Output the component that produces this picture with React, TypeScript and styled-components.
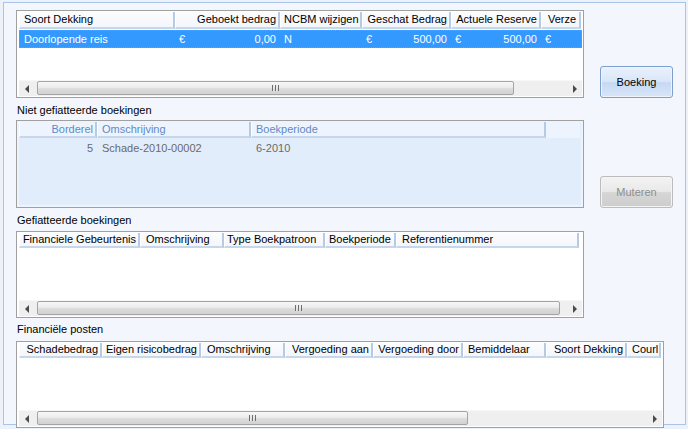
import styled, { createGlobalStyle } from "styled-components";

type Align = "left" | "right";

type Column = {
  label: string;
  w: number;
  align?: Align;
  pad?: number;
};

type Value = string | { money: string };

const GlobalStyle = createGlobalStyle`
  html, body {
    margin: 0;
    padding: 0;
  }

  body {
    width: 688px;
    height: 429px;
    overflow: hidden;
    background: #edf2fa;
    font-family: "Liberation Sans", Arial, sans-serif;
    font-size: 11px;
    color: #000;
  }
`;

const Panel = styled.div`
  box-sizing: border-box;
  width: 683px;
  height: 423px;
  margin: 2px 0 0 3px;
  border: 1px solid #a9c4e9;
  background: #f3f7fd;
  padding: 7px 0 0 12px;
`;

const Section = styled.div`
  display: flex;
  align-items: flex-end;
`;

const Side = styled.div`
  margin-left: 16px;
  display: flex;
`;

const Caption = styled.div<{ $top: number; $bottom: number }>`
  padding: ${(p) => p.$top}px 0 ${(p) => p.$bottom}px 1px;
  line-height: 13px;
  color: #000;
`;

const GridBox = styled.div<{ $w: number; $h: number; $disabled?: boolean }>`
  box-sizing: border-box;
  width: ${(p) => p.$w}px;
  height: ${(p) => p.$h}px;
  border: 1px solid #a0a0a0;
  background: ${(p) => (p.$disabled ? "#e2edfc" : "#fff")};
  box-shadow: ${(p) => (p.$disabled ? "inset 0 0 0 2px #eef4fd" : "none")};
  padding: 1px 1px 1px 2px;
  display: flex;
  flex-direction: column;
  overflow: hidden;
`;

const HeaderRow = styled.div<{ $h: number; $fill?: boolean }>`
  display: flex;
  flex: none;
  height: ${(p) => p.$h}px;
  margin-right: 2px;
  background: ${(p) => (p.$fill ? "#eef4fd" : "transparent")};
`;

const HeaderCell = styled.div<{
  $w: number;
  $h: number;
  $align: Align;
  $pad: number;
  $muted?: boolean;
}>`
  box-sizing: border-box;
  flex: none;
  width: ${(p) => p.$w}px;
  height: ${(p) => p.$h}px;
  padding: ${(p) => (p.$align === "right" ? `0 2px 0 0` : `0 0 0 ${p.$pad - 1}px`)};
  text-align: ${(p) => p.$align};
  line-height: ${(p) => p.$h - 2}px;
  white-space: nowrap;
  overflow: hidden;
  color: ${(p) => (p.$muted ? "#5e8ac6" : "#000")};
  background: ${(p) => (p.$muted ? "#eef4fd" : "linear-gradient(#fbfcfe, #f3f6fb)")};
  border-left: 1px solid #fff;
  border-right: 2px solid #b6cae4;
  border-bottom: 2px solid #c6d6eb;
`;

const DataRow = styled.div<{ $h: number; $selected?: boolean; $muted?: boolean }>`
  display: flex;
  flex: none;
  height: ${(p) => p.$h}px;
  margin-top: 1px;
  line-height: ${(p) => p.$h}px;
  background: ${(p) => (p.$selected ? "#3399ff" : "transparent")};
  color: ${(p) => (p.$selected ? "#fff" : p.$muted ? "#6a6a6a" : "#000")};
  outline: ${(p) => (p.$selected ? "1px dotted #c98a4f" : "none")};
  outline-offset: -1px;
`;

const Cell = styled.div<{ $w: number; $align: Align; $pad: number }>`
  box-sizing: border-box;
  flex: none;
  width: ${(p) => p.$w}px;
  display: flex;
  justify-content: ${(p) => (p.$align === "right" ? "flex-end" : "flex-start")};
  padding: ${(p) => (p.$align === "right" ? `0 4px 0 0` : `0 0 0 ${p.$pad}px`)};
  white-space: nowrap;
  overflow: hidden;
`;

const MoneyCell = styled.div<{ $w: number }>`
  box-sizing: border-box;
  flex: none;
  width: ${(p) => p.$w}px;
  display: flex;
  justify-content: space-between;
  padding: 0 4px;
  white-space: nowrap;
  overflow: hidden;
`;

const ScrollBar = styled.div`
  margin-top: auto;
  flex: none;
  height: 16px;
  display: flex;
  background: #efefef;
  border-top: 1px solid #f7f7f7;
  box-sizing: border-box;
`;

const ScrollButton = styled.div<{ $dir: "left" | "right" }>`
  flex: none;
  width: 17px;
  display: flex;
  align-items: center;
  justify-content: center;

  &::before {
    content: "";
    width: 0;
    height: 0;
    border-top: 4px solid transparent;
    border-bottom: 4px solid transparent;
    ${(p) =>
      p.$dir === "left"
        ? "border-right: 4px solid #4a4a4a; margin-left: -2px;"
        : "border-left: 4px solid #4a4a4a; margin-left: 2px;"}
  }
`;

const Track = styled.div`
  flex: 1;
  display: flex;
  padding: 0 0 1px 1px;
`;

const Thumb = styled.div<{ $w: number }>`
  box-sizing: border-box;
  width: ${(p) => p.$w}px;
  border: 1px solid #a4a4a4;
  border-radius: 2px;
  background: linear-gradient(#f7f7f7, #ececec 45%, #dcdcdc 55%, #d2d2d2);
  display: flex;
  align-items: center;
  justify-content: center;
`;

const Grip = styled.span`
  width: 7px;
  height: 6px;
  background: repeating-linear-gradient(90deg, #6d6d6d 0 1px, #e8e8e8 1px 2px, transparent 2px 3px);
`;

const ActionButton = styled.button<{ $off?: boolean }>`
  box-sizing: border-box;
  width: 73px;
  height: 32px;
  padding: 0;
  border: 1px solid ${(p) => (p.$off ? "#bcbcbc" : "#7c9fcc")};
  border-radius: 3px;
  background: ${(p) =>
    p.$off
      ? "linear-gradient(#f3f3f3, #e9e9e9 48%, #d6d6d6 52%, #cdcdcd)"
      : "linear-gradient(#e9f1fc, #dae6f8 48%, #c6d9f3 52%, #d8e5f8)"};
  color: ${(p) => (p.$off ? "#8e8e8e" : "#000")};
  font-family: inherit;
  font-size: 11px;
  box-shadow: inset 0 0 0 1px ${(p) => (p.$off ? "#f4f4f4" : "#eef4fd")};
`;

type GridProps = {
  w: number;
  h: number;
  headerH: number;
  rowH: number;
  columns: Column[];
  rows?: Value[][];
  selected?: number;
  disabled?: boolean;
  thumb?: number;
};

const DataGrid = ({ w, h, headerH, rowH, columns, rows = [], selected, disabled, thumb }: GridProps) => (
  <GridBox $w={w} $h={h} $disabled={disabled}>
    <HeaderRow $h={headerH} $fill={disabled}>
      {columns.map((c) => (
        <HeaderCell
          key={c.label}
          $w={c.w}
          $h={headerH}
          $align={c.align ?? "left"}
          $pad={c.pad ?? 5}
          $muted={disabled}
        >
          {c.label}
        </HeaderCell>
      ))}
    </HeaderRow>
    {rows.map((row, i) => (
      <DataRow key={i} $h={rowH} $selected={i === selected} $muted={disabled}>
        {row.map((v, j) => {
          const c = columns[j];
          if (typeof v === "object") {
            return (
              <MoneyCell key={j} $w={c.w}>
                <span>€</span>
                <span>{v.money}</span>
              </MoneyCell>
            );
          }
          return (
            <Cell key={j} $w={c.w} $align={c.align ?? "left"} $pad={c.pad ?? 5}>
              {v}
            </Cell>
          );
        })}
      </DataRow>
    ))}
    {thumb !== undefined && (
      <ScrollBar>
        <ScrollButton $dir="left" />
        <Track>
          <Thumb $w={thumb}>
            <Grip />
          </Thumb>
        </Track>
        <ScrollButton $dir="right" />
      </ScrollBar>
    )}
  </GridBox>
);

const dekkingColumns: Column[] = [
  { label: "Soort Dekking", w: 156, pad: 5 },
  { label: "Geboekt bedrag", w: 105, align: "right" },
  { label: "NCBM wijzigen", w: 82, pad: 4 },
  { label: "Geschat Bedrag", w: 89, align: "right" },
  { label: "Actuele Reserve", w: 90, align: "right" },
  { label: "Verze", w: 40, pad: 7 },
];

const nietColumns: Column[] = [
  { label: "Borderel", w: 78, align: "right" },
  { label: "Omschrijving", w: 154, pad: 5 },
  { label: "Boekperiode", w: 295, pad: 5 },
];

const gefiatColumns: Column[] = [
  { label: "Financiele Gebeurtenis", w: 121, align: "right" },
  { label: "Omschrijving", w: 84, pad: 6 },
  { label: "Type Boekpatroon", w: 101, pad: 3 },
  { label: "Boekperiode", w: 71, pad: 4 },
  { label: "Referentienummer", w: 183, pad: 6 },
];

const postenColumns: Column[] = [
  { label: "Schadebedrag", w: 83, align: "right" },
  { label: "Eigen risicobedrag", w: 99, align: "right" },
  { label: "Omschrijving", w: 84, pad: 6 },
  { label: "Vergoeding aan", w: 88, align: "right" },
  { label: "Vergoeding door", w: 90, align: "right" },
  { label: "Bemiddelaar", w: 83, pad: 5 },
  { label: "Soort Dekking", w: 81, align: "right" },
  { label: "Courl", w: 34, pad: 5 },
];

const App = () => {
  return (
    <>
      <GlobalStyle />
      <Panel>
        <Section>
          <DataGrid
            w={568}
            h={88}
            headerH={17}
            rowH={18}
            columns={dekkingColumns}
            rows={[["Doorlopende reis", { money: "0,00" }, "N", { money: "500,00" }, { money: "500,00" }, { money: "" }]]}
            selected={0}
            thumb={477}
          />
          <Side>
            <ActionButton>Boeking</ActionButton>
          </Side>
        </Section>

        <Caption $top={6} $bottom={3}>Niet gefiatteerde boekingen</Caption>
        <Section>
          <DataGrid
            w={568}
            h={88}
            headerH={16}
            rowH={19}
            columns={nietColumns}
            rows={[["5", "Schade-2010-00002", "6-2010"]]}
            disabled
          />
          <Side>
            <ActionButton $off disabled>
              Muteren
            </ActionButton>
          </Side>
        </Section>

        <Caption $top={6} $bottom={4}>Gefiatteerde boekingen</Caption>
        <DataGrid w={568} h={87} headerH={15} rowH={15} columns={gefiatColumns} thumb={523} />

        <Caption $top={5} $bottom={5}>Financiële posten</Caption>
        <DataGrid w={648} h={87} headerH={15} rowH={15} columns={postenColumns} thumb={431} />
      </Panel>
    </>
  );
};

export default App;
